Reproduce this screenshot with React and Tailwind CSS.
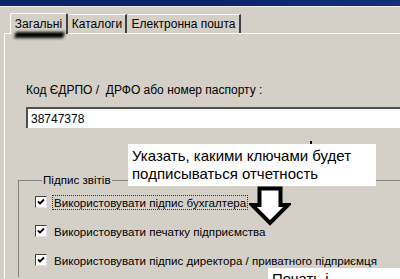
import React from "react";

const Check = () => (
  <span className="w-[12px] h-[12px] shrink-0 bg-white border border-t-[#404040] border-l-[#404040] border-r-[#e0e0e0] border-b-[#e0e0e0] flex items-center justify-center">
    <svg width="8" height="8" viewBox="0 0 8 8">
      <path d="M1 3.5 L3 5.5 L7 1.5" stroke="#000" strokeWidth="1.8" fill="none" />
    </svg>
  </span>
);

const Row = ({ label, focused }) => (
  <div className="flex items-center gap-[6px] h-[14px]">
    <Check />
    <span
      className={`px-[1px] leading-[13px] ${
        focused ? "outline outline-1 outline-dotted outline-[#333]" : ""
      }`}
    >
      {label}
    </span>
  </div>
);

export default function App() {
  return (
    <div
      className="relative w-[400px] h-[279px] overflow-hidden bg-[#d4d0c8] text-black text-[12px]"
      style={{ fontFamily: '"Liberation Sans", Arial, sans-serif' }}
    >
      {/* window title strip */}
      <div className="h-[6px] bg-gradient-to-r from-[#0a246a] via-[#0a246a] to-[#12307c]" />
      <div className="h-px bg-[#eeeeee]" />

      {/* tabs */}
      <div className="mt-[5px] pl-[10px] flex items-end h-[21px]">
        <div className="relative w-[58px] h-[21px] flex items-center justify-center bg-[#d4d0c8] border-t border-l border-white border-r-2 border-r-[#404040] rounded-t-[2px] z-10 -mb-px">
          <span>Загальні</span>
          <div className="absolute left-[4px] right-[2px] top-[18px] h-[6px] bg-black blur-[1.5px] -skew-x-12" />
        </div>
        <div className="w-[58px] h-[19px] flex items-center justify-center border-t border-white border-r-2 border-r-[#404040] ml-[1px]">
          Каталоги
        </div>
        <div className="w-[113px] h-[19px] flex items-center justify-center border-t border-white border-r-2 border-r-[#404040] ml-[1px]">
          Електронна пошта
        </div>
      </div>

      {/* tab panel */}
      <div className="ml-[4px] border-t border-l border-white h-[260px]">
        <div className="pl-[21px] pt-[49px]">
          <div className="leading-[14px] whitespace-nowrap">
            Код ЄДРПО /&nbsp; ДРФО або номер паспорту :
          </div>
          <div className="mt-[10px] h-[21px] bg-white border-t-2 border-l-2 border-t-[#505050] border-l-[#505050] flex items-center pl-[3px]">
            38747378
          </div>
        </div>

        <fieldset className="ml-[13px] mt-[45px] border-t border-l border-[#808080] pl-[16px] pb-[10px] text-[11.6px]">
          <legend className="ml-[7px] px-[1px] leading-[14px]">Підпис звітів</legend>
          <div className="mt-[8px] flex flex-col gap-[15px] whitespace-nowrap">
            <Row label="Використовувати підпис бухгалтера" focused />
            <Row label="Використовувати печатку підприємства" />
            <Row label="Використовувати підпис директора / приватного підприємця" />
          </div>
        </fieldset>
      </div>

      {/* annotation callout */}
      <div className="absolute left-[128px] top-[144px] w-[248px] h-[42px] bg-white pl-[4px] pt-[3px] text-[15px] leading-[18px]">
        <div>Указать, какими ключами будет</div>
        <div>подписываться отчетность</div>
      </div>
      <div className="absolute left-[310px] top-[141px] w-[2px] h-[3px] bg-black" />

      {/* arrow */}
      <svg className="absolute left-[249px] top-[186px]" width="42" height="40" viewBox="0 0 42 40">
        <path
          d="M10.5 2.5 H31.5 V19 H39 L21 37 L3 19 H10.5 Z"
          fill="#fff"
          stroke="#000"
          strokeWidth="4"
          strokeLinejoin="miter"
        />
      </svg>

      {/* second callout, cut off */}
      <div className="absolute left-[268px] top-[268px] w-[140px] h-[20px] bg-white pl-[4px] pt-[2px] text-[15px] leading-[18px]">
        Печать і
      </div>
    </div>
  );
}
